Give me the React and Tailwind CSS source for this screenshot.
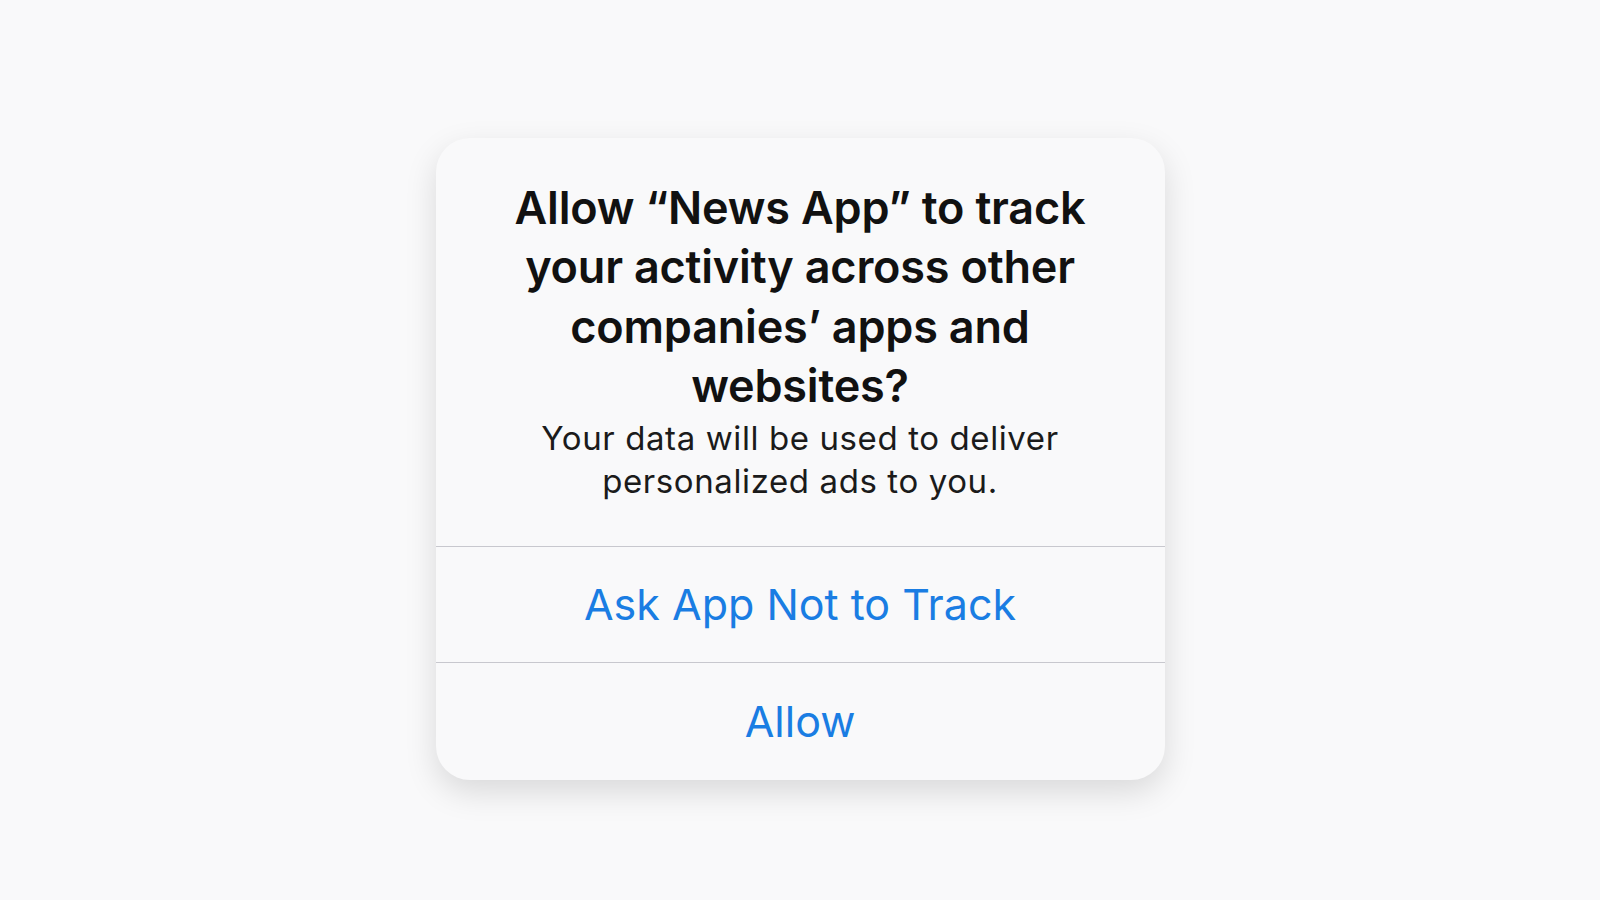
import React from 'react';

const font = { fontFamily: 'Inter, "Noto Sans", sans-serif' };

function AlertButton({ label, last }) {
  return (
    <button
      className={`w-full flex items-center justify-center text-[43px] leading-none text-[#1a7de3] border-t border-[#c8c8ce] ${last ? 'h-[118px]' : 'h-[116px]'}`}
    >
      {label}
    </button>
  );
}

export default function App() {
  return (
    <div className="min-h-screen w-full bg-[#f9f9fa] flex justify-center pt-[138px]" style={font}>
      <div className="w-[729px] h-[642px] bg-[#f9f9fa] rounded-[34px] shadow-[0_12px_32px_rgba(0,0,0,0.13)] overflow-hidden flex flex-col">
        <div className="flex-1 flex flex-col items-center text-center px-8 pt-[40px]">
          <h1 className="text-[45px] leading-[59.3px] font-semibold text-[#111111] tracking-[-0.2px]">
            Allow “News App” to track
            <br />
            your activity across other
            <br />
            companies’ apps and
            <br />
            websites?
          </h1>
          <p className="mt-[2px] text-[33px] leading-[43px] text-[#1b1b1b] tracking-[0.6px]">
            Your data will be used to deliver
            <br />
            personalized ads to you.
          </p>
        </div>
        <AlertButton label="Ask App Not to Track" />
        <AlertButton label="Allow" last />
      </div>
    </div>
  );
}
